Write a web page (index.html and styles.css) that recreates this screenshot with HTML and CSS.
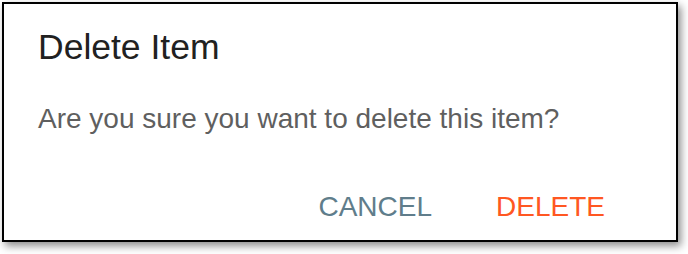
FILE: index.html
```html
<!DOCTYPE html>
<html>
<head>
<meta charset="utf-8">
<link rel="stylesheet" href="styles.css">
</head>
<body>
<div class="dialog">
  <h2 class="title">Delete Item</h2>
  <p class="message">Are you sure you want to delete this item?</p>
  <div class="actions">
    <button class="btn btn-cancel">CANCEL</button>
    <button class="btn btn-delete">DELETE</button>
  </div>
</div>
</body>
</html>
```
FILE: styles.css
```css
html, body {
  margin: 0;
  padding: 0;
  background: #ffffff;
}
body {
  padding: 2px;
  width: 688px;
  height: 254px;
  box-sizing: border-box;
  font-family: "Liberation Sans", Arial, sans-serif;
}
.dialog {
  width: 676px;
  height: 240px;
  box-sizing: border-box;
  border: 2px solid #000;
  background: #fff;
  box-shadow: 3px 4px 8px rgba(0,0,0,0.45);
  padding: 26px 34px 0 34px;
  display: flex;
  flex-direction: column;
}
.title {
  margin: 0;
  font-size: 35.5px;
  font-weight: 400;
  color: #212121;
  line-height: 35px;
}
.message {
  margin: 40px 0 0 0;
  font-size: 28px;
  color: #5f5f5f;
  line-height: 28px;
}
.actions {
  display: flex;
  justify-content: flex-end;
  gap: 64px;
  margin-top: 60px;
  padding-right: 37px;
}
.btn {
  background: none;
  border: none;
  padding: 0;
  font-family: inherit;
  font-size: 28px;
  line-height: 28px;
}
.btn-cancel { color: #607d8b; }
.btn-delete { color: #ff5722; }
```
